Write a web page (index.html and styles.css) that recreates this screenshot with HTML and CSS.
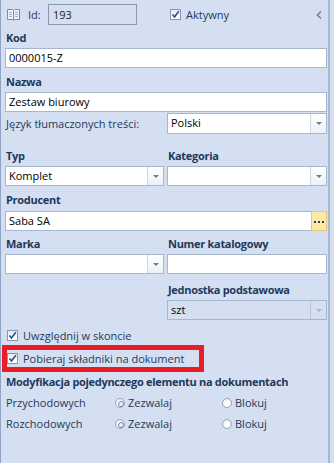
FILE: index.html
```html
<!DOCTYPE html>
<html lang="pl">
<head>
    <meta charset="UTF-8">
    <title>Zestaw biurowy</title>
    <link rel="stylesheet" href="styles.css">
</head>
<body>
    <div class="panel">
        <div class="head">
            <svg class="book" width="13" height="13" viewBox="0 0 13 13">
                <path d="M0.5 1.5 H5.5 L6.5 2.5 L7.5 1.5 H12.5 V11.5 H7.5 L6.5 12.5 L5.5 11.5 H0.5 Z" fill="#eef3fa" stroke="#6f8fb5"/>
                <path d="M6.5 2.5 V12" stroke="#6f8fb5"/>
                <path d="M2 4.5 H5 M2 6.5 H5 M2 8.5 H5 M8 4.5 H11 M8 6.5 H11 M8 8.5 H11" stroke="#9fb6d3"/>
            </svg>
            <span class="id-label">Id:</span>
            <div class="id-box">193</div>
            <label class="check head-check"><span class="box"><svg viewBox="0 0 9 9" width="9" height="9"><path d="M1.5 4.5 L3.5 7 L7.8 1.2" fill="none" stroke="#2c4f86" stroke-width="1.6"/></svg></span>Aktywny</label>
            <svg class="collapse" width="6" height="8" viewBox="0 0 6 8"><path d="M5 0.5 L1.3 4 L5 7.5" fill="none" stroke="#6c7888" stroke-width="1.3"/></svg>
        </div>

        <div class="label first">Kod</div>
        <div class="input">0000015-Z</div>

        <div class="label">Nazwa</div>
        <div class="input">Zestaw biurowy</div>

        <div class="lang-row">
            <span class="plain">Język tłumaczonych treści:</span>
            <div class="combo tall"><span class="value">Polski</span><span class="drop"></span></div>
        </div>

        <div class="cols">
            <div>
                <div class="label">Typ</div>
                <div class="combo"><span class="value">Komplet</span><span class="drop"></span></div>
            </div>
            <div>
                <div class="label">Kategoria</div>
                <div class="combo"><span class="value"></span><span class="drop"></span></div>
            </div>
        </div>

        <div class="label producer">Producent</div>
        <div class="combo"><span class="value">Saba SA</span><span class="dots"><svg width="10" height="3" viewBox="0 0 10 3"><rect x="0" y="0" width="2" height="2" fill="#2f3e55"/><rect x="4" y="0" width="2" height="2" fill="#2f3e55"/><rect x="8" y="0" width="2" height="2" fill="#2f3e55"/></svg></span></div>

        <div class="cols brand">
            <div>
                <div class="label">Marka</div>
                <div class="combo"><span class="value"></span><span class="drop"></span></div>
            </div>
            <div>
                <div class="label">Numer katalogowy</div>
                <div class="input"></div>
            </div>
        </div>

        <div class="cols unit">
            <div></div>
            <div>
                <div class="label">Jednostka podstawowa</div>
                <div class="combo disabled"><span class="value">szt</span><span class="drop"></span></div>
            </div>
        </div>

        <label class="check row-check"><span class="box"><svg viewBox="0 0 9 9" width="9" height="9"><path d="M1.5 4.5 L3.5 7 L7.8 1.2" fill="none" stroke="#2c4f86" stroke-width="1.6"/></svg></span>Uwzględnij w skoncie</label>

        <div class="highlight">
            <label class="check"><span class="box"><svg viewBox="0 0 9 9" width="9" height="9"><path d="M1.5 4.5 L3.5 7 L7.8 1.2" fill="none" stroke="#2c4f86" stroke-width="1.6"/></svg></span>Pobieraj składniki na dokument</label>
        </div>

        <div class="label mod">Modyfikacja pojedynczego elementu na dokumentach</div>
        <div class="radios">
            <span class="plain">Przychodowych</span>
            <label class="radio"><span class="dot on"></span>Zezwalaj</label>
            <label class="radio"><span class="dot"></span>Blokuj</label>

            <span class="plain">Rozchodowych</span>
            <label class="radio"><span class="dot on"></span>Zezwalaj</label>
            <label class="radio"><span class="dot"></span>Blokuj</label>
        </div>
    </div>
</body>
</html>
```

FILE: styles.css
```css
* {
    margin: 0;
    padding: 0;
    box-sizing: border-box;
}
body {
    font-family: "Open Sans", "Noto Sans", sans-serif;
    font-size: 11px;
    color: #1e395b;
    background-color: #d4e0f1;
    width: 334px;
    height: 463px;
    overflow: hidden;
}
.panel {
    width: 330px;
    height: 463px;
    border-left: 1px solid #8fa4c4;
    border-right: 2px solid #a6b7d1;
    padding: 4px 1px 0 4px;
}
.head {
    display: flex;
    align-items: center;
    height: 21px;
}
.book {
    margin-left: 2px;
}
.id-label {
    margin-left: 8px;
    width: 20px;
}
.id-box {
    width: 89px;
    height: 21px;
    border: 1px solid #8b98aa;
    line-height: 19px;
    padding-left: 4px;
    color: #1b1b1b;
}
.collapse {
    margin-left: auto;
    margin-right: 5px;
}
.label {
    font-weight: bold;
    letter-spacing: -0.3px;
    height: 16px;
    line-height: 16px;
    margin: 6px 0 2px 1px;
}
.label.first {
    margin-top: 5px;
}
.label.producer {
    margin-bottom: 3px;
}
.brand .label {
    margin-top: 5px;
}
.unit .label {
    margin-top: 8px;
}
.input,
.combo {
    height: 20px;
    background-color: #fff;
    border: 1px solid #a5b6cf;
    line-height: 18px;
    padding-left: 3px;
    color: #000;
    display: flex;
}
.combo .value {
    flex: 1;
}
.combo .drop {
    width: 16px;
    border-left: 1px solid #cdd6e3;
    background: linear-gradient(#ffffff, #edf1f7);
    position: relative;
}
.combo .drop::after {
    content: "";
    position: absolute;
    left: 5px;
    top: 8px;
    border-left: 3px solid transparent;
    border-right: 3px solid transparent;
    border-top: 3px solid #6e7b8c;
}
.combo.disabled {
    background-color: #d4e0f1;
}
.combo.disabled .drop {
    background: transparent;
    border-left-color: #b7c5da;
}
.combo.disabled .drop::after {
    border-top-color: #aab6c6;
}
.combo .dots {
    width: 16px;
    border: 1px solid #e9c873;
    margin: -1px -1px -1px 0;
    background-color: #fde9a6;
    display: flex;
    align-items: center;
    justify-content: center;
    padding-top: 2px;
}
.combo.tall {
    height: 21px;
}
.lang-row {
    display: grid;
    grid-template-columns: 159px 1fr;
    column-gap: 3px;
    align-items: center;
    margin-top: 1px;
}
.plain {
    padding-left: 1px;
}
.cols {
    display: grid;
    grid-template-columns: 159px 1fr;
    column-gap: 3px;
}
.lang-row + .cols .label {
    margin-top: 14px;
}
.check {
    display: flex;
    align-items: center;
}
.check .box {
    width: 11px;
    height: 11px;
    border: 1px solid #8496b3;
    background: linear-gradient(#e6ecf5, #ffffff);
    margin-right: 5px;
    display: flex;
    align-items: center;
    justify-content: center;
}
.head-check {
    margin-left: 33px;
}
.row-check {
    height: 20px;
    margin: 5px 0 0 2px;
}
.highlight {
    border: 5px solid #ea1c26;
    width: 202px;
    height: 27px;
    margin-left: -3px;
}
.highlight .check {
    height: 17px;
}
.label.mod {
    margin: 2px 0 2px 1px;
}
.radios {
    display: grid;
    grid-template-columns: 110px 107px 1fr;
    grid-auto-rows: 21px;
    align-items: center;
}
.radio {
    display: flex;
    align-items: center;
}
.dot {
    width: 10px;
    height: 10px;
    border-radius: 50%;
    border: 1px solid #99a4b3;
    background: radial-gradient(circle at 50% 60%, #ffffff 30%, #dfe4ec 100%);
    margin-right: 3px;
    position: relative;
}
.dot.on::after {
    content: "";
    position: absolute;
    left: 2px;
    top: 2px;
    width: 4px;
    height: 4px;
    border-radius: 50%;
    border: 1px solid #6d89b0;
    background-color: #eef2f8;
}
```
